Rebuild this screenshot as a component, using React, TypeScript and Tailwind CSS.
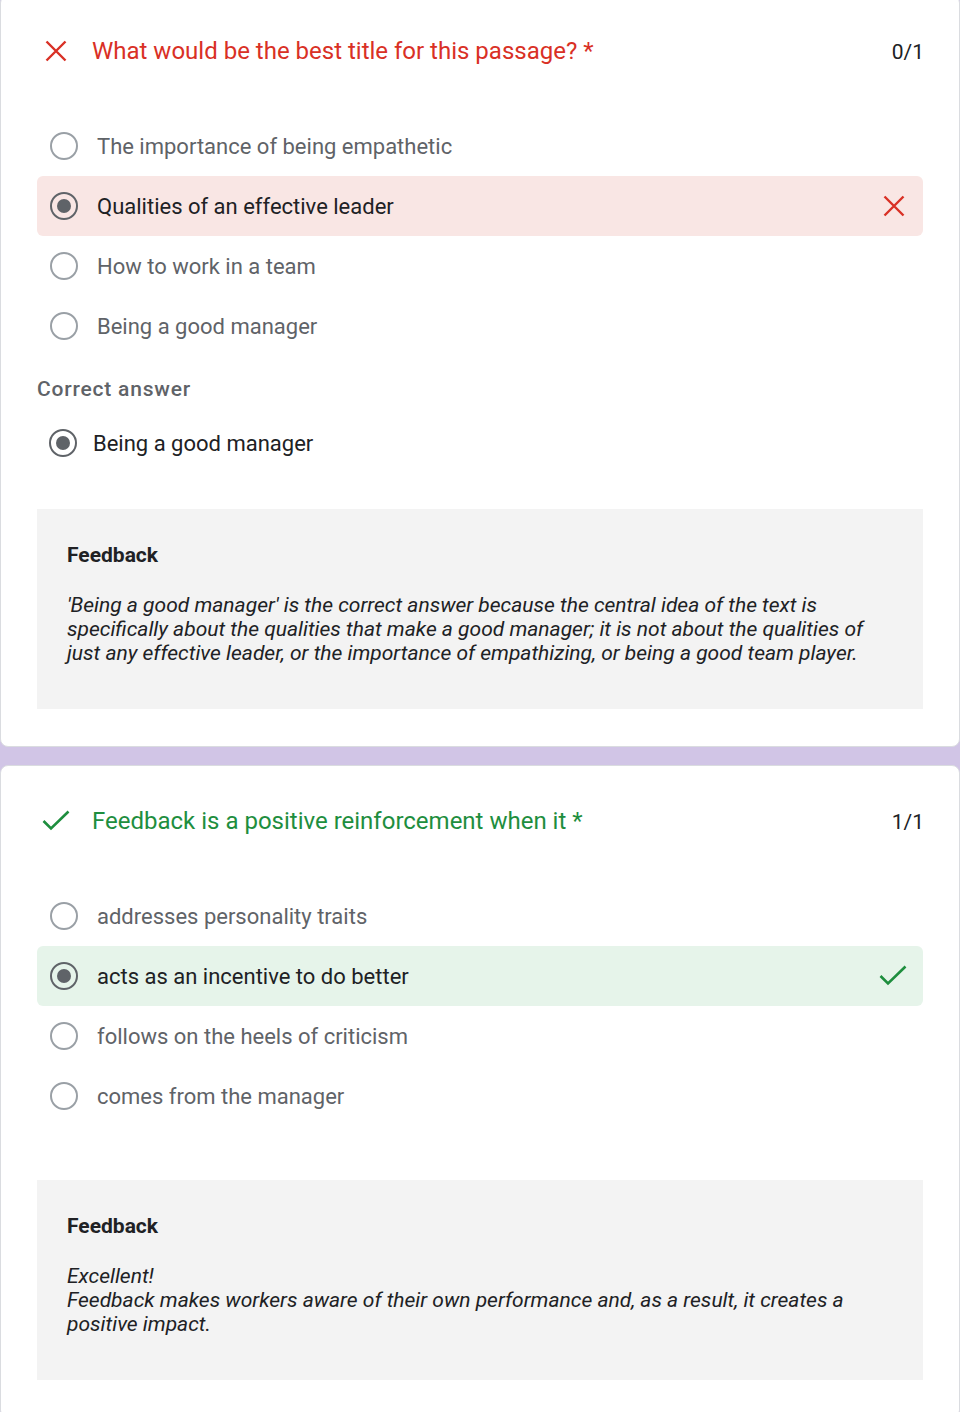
import React from 'react';

type Option = { label: string; selected?: boolean };

interface Question {
  title: string;
  correct: boolean;
  score: string;
  options: Option[];
  correctAnswer?: string;
  feedback: string[];
}

const questions: Question[] = [
  {
    title: 'What would be the best title for this passage?',
    correct: false,
    score: '0/1',
    options: [
      { label: 'The importance of being empathetic' },
      { label: 'Qualities of an effective leader', selected: true },
      { label: 'How to work in a team' },
      { label: 'Being a good manager' },
    ],
    correctAnswer: 'Being a good manager',
    feedback: [
      "'Being a good manager' is the correct answer because the central idea of the text is specifically about the qualities that make a good manager; it is not about the qualities of just any effective leader, or the importance of empathizing, or being a good team player.",
    ],
  },
  {
    title: 'Feedback is a positive reinforcement when it',
    correct: true,
    score: '1/1',
    options: [
      { label: 'addresses personality traits' },
      { label: 'acts as an incentive to do better', selected: true },
      { label: 'follows on the heels of criticism' },
      { label: 'comes from the manager' },
    ],
    feedback: [
      'Excellent!',
      'Feedback makes workers aware of their own performance and, as a result, it creates a positive impact.',
    ],
  },
];

function CrossIcon({ size = 22 }: { size?: number }) {
  return (
    <svg width={size} height={size} viewBox="0 0 22 22" className="shrink-0">
      <path d="M1.5 1.5 L20.5 20.5 M20.5 1.5 L1.5 20.5" stroke="#d93025" strokeWidth="2.4" fill="none" />
    </svg>
  );
}

function CheckIcon() {
  return (
    <svg width="28" height="22" viewBox="0 0 28 22" className="shrink-0">
      <path d="M1.5 11 L9 18.5 L26.5 1.5" stroke="#1e8e3e" strokeWidth="2.6" fill="none" />
    </svg>
  );
}

function Radio({ checked }: { checked?: boolean }) {
  return (
    <span
      className={[
        'w-[28px] h-[28px] rounded-full border-[2.5px] flex items-center justify-center shrink-0',
        checked ? 'border-[#5f6368]' : 'border-[#9aa0a6]',
      ].join(' ')}
    >
      {checked && <span className="w-[14px] h-[14px] rounded-full bg-[#5f6368]" />}
    </span>
  );
}

function QuestionCard({ q, first }: { q: Question; first?: boolean }) {
  const accent = q.correct ? 'text-[#1e8e3e]' : 'text-[#d93025]';
  return (
    <div
      className={[
        'bg-white border border-[#dadce0] rounded-lg px-[36px] pb-[37px]',
        first ? '-mt-[5px]' : '',
      ].join(' ')}
    >
      <div className="flex items-center h-[28px] mt-[41px]">
        <div className="w-[55px] flex items-center pl-[5px]">
          {q.correct ? <CheckIcon /> : <span className="pl-[3px]"><CrossIcon /></span>}
        </div>
        <div className={`flex-1 text-[24px] ${accent}`}>
          {q.title} <span>*</span>
        </div>
        <div className="text-[21px] text-[#202124] pt-[3px] -mr-[1px]">{q.score}</div>
      </div>

      <div className="mt-[51px]">
        {q.options.map(o => {
          const bg = o.selected ? (q.correct ? 'bg-[#e6f4ea]' : 'bg-[#f9e6e4]') : '';
          return (
            <div key={o.label} className={`h-[60px] flex items-center pl-[13px] pr-[16px] rounded-md ${bg}`}>
              <Radio checked={o.selected} />
              <span
                className={[
                  'ml-[19px] flex-1 text-[22px]',
                  o.selected ? 'text-[#202124]' : 'text-[#5f6368]',
                ].join(' ')}
              >
                {o.label}
              </span>
              {o.selected && (q.correct ? <CheckIcon /> : <span className="pr-[2px]"><CrossIcon /></span>)}
            </div>
          );
        })}
      </div>

      {q.correctAnswer && (
        <div>
          <div className="mt-[21px] leading-[24px] text-[21px] font-medium tracking-[0.8px] text-[#5f6368]">
            Correct answer
          </div>
          <div className="mt-[18px] h-[48px] flex items-center pl-[12px]">
            <Radio checked />
            <span className="ml-[16px] text-[22px] text-[#202124]">{q.correctAnswer}</span>
          </div>
        </div>
      )}

      <div
        className={[
          'bg-[#f3f3f3] h-[200px] px-[30px] pt-[34px]',
          q.correctAnswer ? 'mt-[42px]' : 'mt-[54px]',
        ].join(' ')}
      >
        <div className="text-[21px] leading-[24px] font-bold text-[#202124]">Feedback</div>
        <div className="mt-[26px] text-[21px] leading-[24px] italic text-[#202124] pr-[20px]">
          {q.feedback.map(line => (
            <div key={line}>{line}</div>
          ))}
        </div>
      </div>
    </div>
  );
}

export default function App() {
  return (
    <div
      className="min-h-screen bg-[#d1c5e6] overflow-hidden flex flex-col gap-[18px]"
      style={{ fontFamily: 'Roboto, "Noto Sans", sans-serif' }}
    >
      {questions.map((q, i) => (
        <QuestionCard key={q.title} q={q} first={i === 0} />
      ))}
    </div>
  );
}
